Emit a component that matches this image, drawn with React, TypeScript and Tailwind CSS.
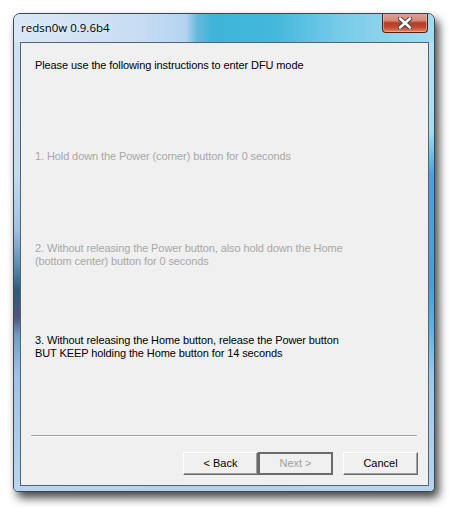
import React from "react";

const body = { fontFamily: '"Liberation Sans", Arial, sans-serif' };

function CloseIcon() {
  return (
    <svg width="14" height="12" viewBox="0 0 14 12">
      <path d="M2 1.5 L12 10.5 M12 1.5 L2 10.5" stroke="#3a3a3a" strokeWidth="4.4" strokeLinecap="round" />
      <path d="M2 1.5 L12 10.5 M12 1.5 L2 10.5" stroke="#ffffff" strokeWidth="2.6" strokeLinecap="round" />
    </svg>
  );
}

export default function App() {
  return (
    <div className="w-[449px] h-[507px] bg-white overflow-hidden">
      <div className="ml-[13px] mt-[13px] w-[422px] h-[479px] rounded-t-[7px] rounded-b-[5px] border border-[#3b4650] shadow-[4px_6px_10px_rgba(0,0,0,0.72)] flex flex-col overflow-hidden bg-[#b8d4ee]">
        {/* title bar */}
        <div className="h-[28px] flex items-start justify-between bg-[linear-gradient(90deg,#d9e7f6_0%,#c8ddf3_30%,#b3d3f0_41%,#6ab9dc_43.5%,#3fb3d9_47%,#43b8dc_62%,#79cbe9_78%,#a4dbef_100%)]">
          <div
            className="pl-[7px] pt-[6px] text-[11.5px] leading-[15px] text-black"
            style={{ fontFamily: '"Open Sans", "Noto Sans", sans-serif', textShadow: "0 0 6px rgba(255,255,255,0.9)" }}
          >
            redsn0w 0.9.6b4
          </div>
          <div className="mr-[6px] -mt-px w-[46px] h-[20px] rounded-b-[4px] border border-[#4a2218] border-t-0 flex items-center justify-center bg-[linear-gradient(180deg,#e3a595_0%,#d08a78_40%,#b83c26_52%,#c4482f_75%,#dc8a70_100%)] shadow-[inset_0_0_0_1px_rgba(255,200,190,0.5)]">
            <CloseIcon />
          </div>
        </div>
        {/* middle */}
        <div className="flex flex-1">
          <div className="w-[6px] bg-[linear-gradient(180deg,#cfe2f4_0%,#c4daf1_30%,#9fc2e6_42%,#5d8fb8_50%,#2d5a78_56%,#4f557e_62%,#6e9cc8_66%,#9cc4e8_75%,#b8d4ee_100%)]" />
          <div className="flex-1 border border-[#56626e] bg-[#f0f0f0] flex flex-col text-[11px] leading-[13px] tracking-[-0.1px]" style={body}>
            <div className="pt-[16px] pl-[14px] flex flex-col">
              <div className="h-[91px] text-black">Please use the following instructions to enter DFU mode</div>
              <div className="h-[92px] text-[#a7a7a7]">1. Hold down the Power (corner) button for 0 seconds</div>
              <div className="h-[92px] text-[#a7a7a7]">
                2. Without releasing the Power button, also hold down the Home
                <br />
                (bottom center) button for 0 seconds
              </div>
              <div className="h-[101px] text-black">
                3. Without releasing the Home button, release the Power button
                <br />
                BUT KEEP holding the Home button for 14 seconds
              </div>
            </div>
            <div className="ml-[10px] mr-[11px] h-[2px] border-t border-t-[#a0a0a0] border-b border-b-white" />
            <div className="flex justify-end mt-[15px] mr-[10px] tracking-normal">
              <div className="w-[75px] h-[23px] flex items-center justify-center bg-[#f0f0f0] border border-t-white border-l-white border-r-[#696969] border-b-[#696969] shadow-[inset_-1px_-1px_0_#a0a0a0] text-black">
                &lt; Back
              </div>
              <div className="w-[75px] h-[23px] flex items-center justify-center bg-[#f0f0f0] border-2 border-[#6a6a6a] text-[#a0a0a0]">
                Next &gt;
              </div>
              <div className="ml-[10px] w-[75px] h-[23px] flex items-center justify-center bg-[#f0f0f0] border border-t-white border-l-white border-r-[#696969] border-b-[#696969] shadow-[inset_-1px_-1px_0_#a0a0a0] text-black">
                Cancel
              </div>
            </div>
          </div>
          <div className="w-[5px] bg-[linear-gradient(180deg,#b5e0f2_0%,#a8dcf0_20%,#3ba9d9_30%,#3aa6d6_55%,#62b4e0_65%,#9cc8ec_75%,#b6d3ef_100%)]" />
        </div>
        <div className="h-[5px] bg-[linear-gradient(90deg,#b9d4ee_0%,#b3d0ec_50%,#b9d5ee_100%)]" />
      </div>
    </div>
  );
}
